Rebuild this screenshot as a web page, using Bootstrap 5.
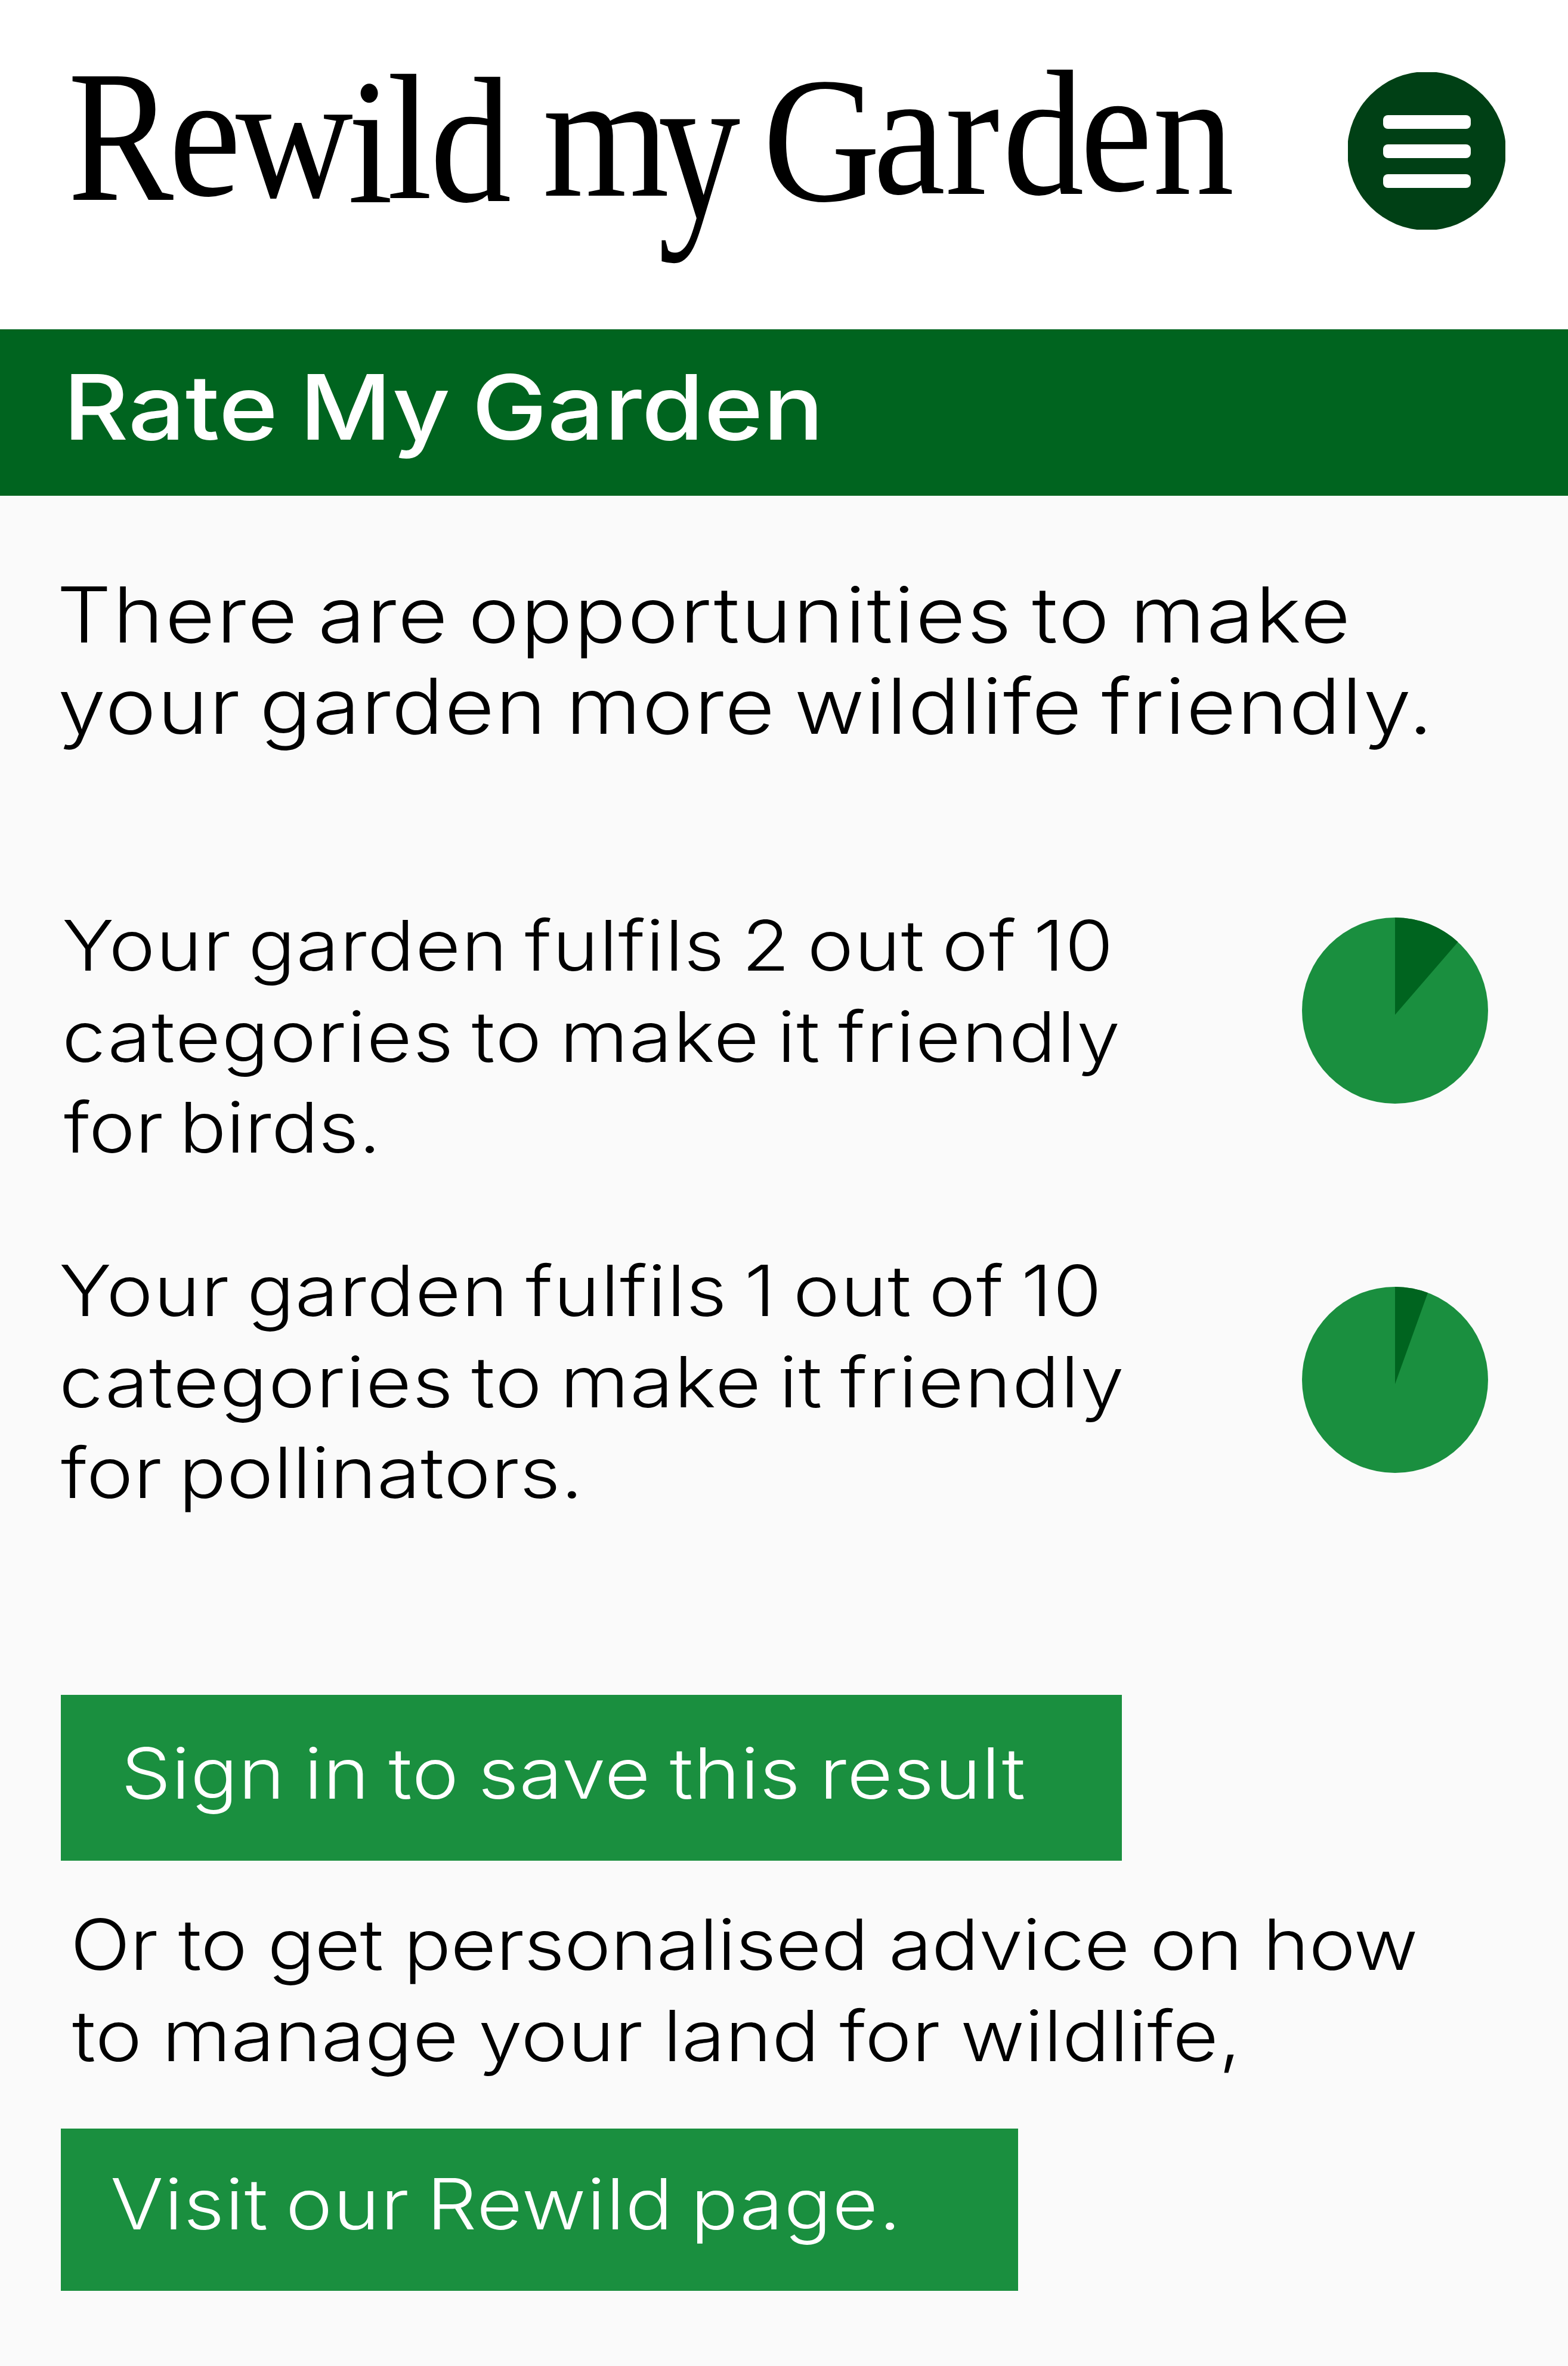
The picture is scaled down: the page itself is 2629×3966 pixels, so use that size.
<!DOCTYPE html>
<html lang="en">
<head>
<meta charset="utf-8">
<meta name="viewport" content="width=device-width, initial-scale=1">
<title>Rewild my Garden – Rate My Garden</title>
<link href="https://cdn.jsdelivr.net/npm/bootstrap@5.3.0/dist/css/bootstrap.min.css" rel="stylesheet">
<style>
body{background:#fafafa;color:#000;font-family:Inter,"Open Sans",sans-serif;font-weight:300;font-size:118px;line-height:152.5px;height:3966px;overflow:hidden}
.site-head{height:552px;background:#fff}
.logo-art{width:2100px;height:552px;font-family:"Liberation Serif",serif;font-size:300px}
.menu-btn{width:264px;height:264px;margin:121px 105px 0 0}
.title-bar{height:279px;background:#00641f;padding-bottom:18px}
.title-bar h1{font-size:151px;line-height:1.2;font-weight:500}
/* one printed line, slightly extended */
.ln{display:block;white-space:nowrap;transform:scaleX(1.12);transform-origin:0 50%;width:max-content;word-spacing:-9px}
.title-bar .ln{word-spacing:-8px}
.intro .ln{word-spacing:-10px}
.intro{padding-top:123px;font-size:129px;line-height:153px}
.score-birds{margin-top:249px;font-size:117px;height:578px}
.score-poll{height:754px}
.pie{width:312px;height:312px;margin-right:134px}
.cta{background:#1a8f3f;color:#fff;border:0;border-radius:0;margin-left:102px;font-size:118px;font-weight:300;line-height:152.5px;text-align:left}
.cta:hover{background:#00641f;color:#fff}
.cta-sign{width:1779px;height:278px;padding:0 0 16px 101px}
.cta-visit{width:1605px;height:272px;padding:0 0 20px 83px;margin-top:80px}
.advice{margin-top:64px}
</style>
<script src="https://cdn.jsdelivr.net/npm/bootstrap@5.3.0/dist/js/bootstrap.bundle.min.js"></script>
</head>
<body>
<header class="site-head d-flex justify-content-between align-items-start">
  <a href="#" class="d-block text-black text-decoration-none" aria-label="Rewild my Garden">
    <svg class="logo-art d-block" viewBox="0 0 2100 552">
      <text transform="scale(.84 1)" x="135.7" y="335" font-size="316">R</text>
      <text transform="scale(.91 1)" x="311 434 640.7 713.2 792.3 930 1000" y="327 330 339 332 337 328 328">ewild m</text>
      <text transform="scale(.77 1)" x="1433" y="364" font-size="358">y</text>
      <text transform="scale(.91 1)" x="1405.5 1608.8 1741.8 1847.3 1990.1 2124" y="336 324 325 325 319 325">Garden</text>
    </svg>
  </a>
  <button type="button" class="menu-btn btn p-0 border-0 rounded-0" aria-label="Menu">
    <svg class="d-block w-100 h-100" viewBox="0 0 264 264">
      <circle cx="132" cy="132" r="133" fill="#004015"/>
      <g fill="#fff"><rect x="59" y="72" width="147" height="23" rx="8"/><rect x="59" y="121" width="147" height="23" rx="8"/><rect x="59" y="171" width="147" height="23" rx="8"/></g>
    </svg>
  </button>
</header>
<section class="title-bar d-flex align-items-center text-white">
  <h1 class="mb-0"><span class="ln" style="margin-left:105.5px">Rate My Garden</span></h1>
</section>
<main>
  <p class="intro mb-0">
    <span class="ln" style="margin-left:95px;letter-spacing:2.19px">There are opportunities to make</span>
    <span class="ln" style="margin-left:96.5px;letter-spacing:1.56px">your garden more wildlife friendly.</span>
  </p>
  <section class="score-birds d-flex justify-content-between align-items-start">
    <p class="mb-0">
      <span class="ln" style="margin-left:104px;letter-spacing:1.14px">Your garden fulfils 2 out of 10</span>
      <span class="ln" style="margin-left:104px;letter-spacing:1.64px">categories to make it friendly</span>
      <span class="ln" style="margin-left:107px">for birds.</span>
    </p>
    <svg class="pie" style="margin-top:29px" viewBox="0 0 312 312" role="img" aria-label="2 out of 10">
      <circle cx="156" cy="156" r="156" fill="#1a8f3f"/><path d="M156 163V0A156 156 0 0 1 261.5 41Z" fill="#00641f"/>
    </svg>
  </section>
  <section class="score-poll d-flex justify-content-between align-items-start">
    <p class="mb-0">
      <span class="ln" style="margin-left:99px;letter-spacing:1.12px">Your garden fulfils 1 out of 10</span>
      <span class="ln" style="margin-left:99px;letter-spacing:1.54px">categories to make it friendly</span>
      <span class="ln" style="margin-left:102px;letter-spacing:.58px">for pollinators.</span>
    </p>
    <svg class="pie" style="margin-top:70px" viewBox="0 0 312 312" role="img" aria-label="1 out of 10">
      <circle cx="156" cy="156" r="156" fill="#1a8f3f"/><path d="M156 163V0A156 156 0 0 1 211 10Z" fill="#00641f"/>
    </svg>
  </section>
  <a href="#" class="btn cta cta-sign d-flex align-items-center"><span class="ln" style="letter-spacing:.82px;word-spacing:-6px">Sign in to save this result</span></a>
  <p class="advice mb-0">
    <span class="ln" style="margin-left:118px;letter-spacing:-.56px;word-spacing:-2px">Or to get personalised advice on how</span>
    <span class="ln" style="margin-left:121px;letter-spacing:.41px;word-spacing:-4px">to manage your land for wildlife,</span>
  </p>
  <a href="#" class="btn cta cta-visit d-flex align-items-center"><span class="ln" style="letter-spacing:1.29px">Visit our Rewild page.</span></a>
</main>
</body>
</html>
